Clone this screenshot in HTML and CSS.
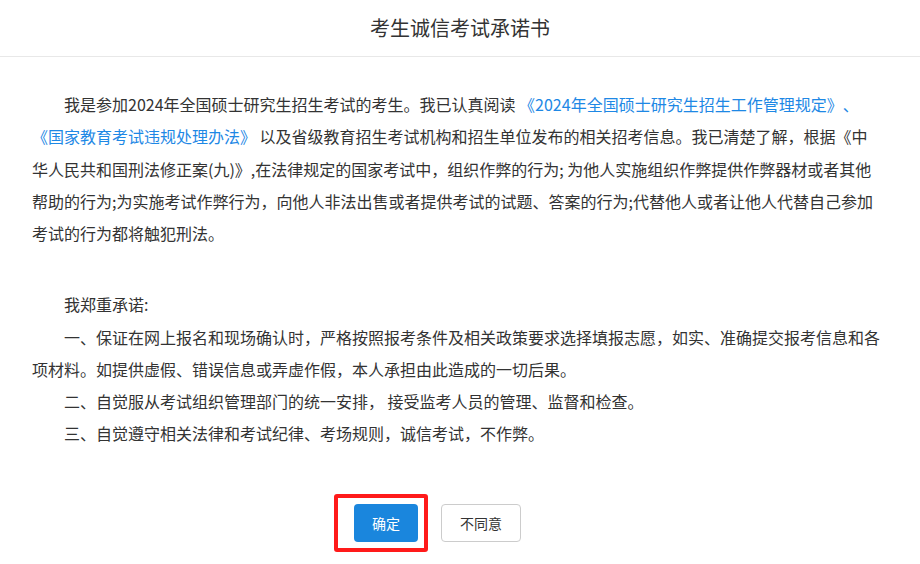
FILE: index.html
```html
<!DOCTYPE html>
<html lang="zh-CN">
<head>
<meta charset="utf-8">
<title>考生诚信考试承诺书</title>
<link rel="stylesheet" href="styles.css">
</head>
<body>
<div class="page">
  <header class="header">考生诚信考试承诺书</header>
  <main class="content">
    <p class="para">我是参加2024年全国硕士研究生招生考试的考生。我已认真阅读 <a class="link">《2024年全国硕士研究生招生工作管理规定》、</a><a class="link">《国家教育考试违规处理办法》</a> 以及省级教育招生考试机构和招生单位发布的相关招考信息。我已清楚了解，根据《中华人民共和国刑法修正案(九)》,在法律规定的国家考试中，组织作弊的行为; 为他人实施组织作弊提供作弊器材或者其他帮助的行为;为实施考试作弊行为，向他人非法出售或者提供考试的试题、答案的行为;代替他人或者让他人代替自己参加考试的行为都将触犯刑法。</p>
    <div class="promise">
      <p class="para">我郑重承诺:</p>
      <p class="para">一、保证在网上报名和现场确认时，严格按照报考条件及相关政策要求选择填报志愿，如实、准确提交报考信息和各项材料。如提供虚假、错误信息或弄虚作假，本人承担由此造成的一切后果。</p>
      <p class="para">二、自觉服从考试组织管理部门的统一安排， 接受监考人员的管理、监督和检查。</p>
      <p class="para">三、自觉遵守相关法律和考试纪律、考场规则，诚信考试，不作弊。</p>
    </div>
  </main>
  <div class="actions">
    <div class="confirm-wrap">
      <button class="btn btn-primary">确定</button>
      <span class="highlight"></span>
    </div>
    <button class="btn btn-default">不同意</button>
  </div>
</div>
</body>
</html>
```
FILE: styles.css
```css
html, body {
  margin: 0;
  padding: 0;
  background: #ffffff;
}
body {
  font-family: "Noto Sans CJK SC", "Noto Sans", sans-serif;
  color: #333333;
  text-spacing-trim: space-all;
}
.page {
  min-height: 564px;
}
.header {
  height: 56px;
  line-height: 56px;
  text-align: center;
  font-size: 20px;
  color: #333333;
  border-bottom: 1px solid #e8e8e8;
}
.content {
  padding: 31px 38px 0 32px;
}
.para {
  margin: 0;
  font-size: 16px;
  line-height: 32.25px;
  text-indent: 2em;
}
.link {
  color: #1e88e5;
  text-decoration: none;
}
.promise {
  margin-top: 39px;
}
.actions {
  display: flex;
  align-items: flex-start;
  gap: 23px;
  padding-left: 354px;
  padding-bottom: 22px;
  margin-top: 54px;
}
.confirm-wrap {
  position: relative;
  width: 64px;
  height: 38px;
}
.btn {
  display: block;
  height: 38px;
  border-radius: 4px;
  font-family: "Noto Sans CJK SC", "Noto Sans", sans-serif;
  font-size: 14px;
  padding: 0;
  margin: 0;
  cursor: pointer;
}
.btn-primary {
  width: 64px;
  background: #1a86dd;
  border: none;
  color: #ffffff;
}
.btn-default {
  width: 80px;
  background: #ffffff;
  border: 1px solid #cccccc;
  color: #333333;
}
.highlight {
  position: absolute;
  left: -20px;
  top: -10px;
  width: 94px;
  height: 58px;
  box-sizing: border-box;
  border: 4px solid #ff1a1a;
  border-radius: 3px;
  pointer-events: none;
}
```
